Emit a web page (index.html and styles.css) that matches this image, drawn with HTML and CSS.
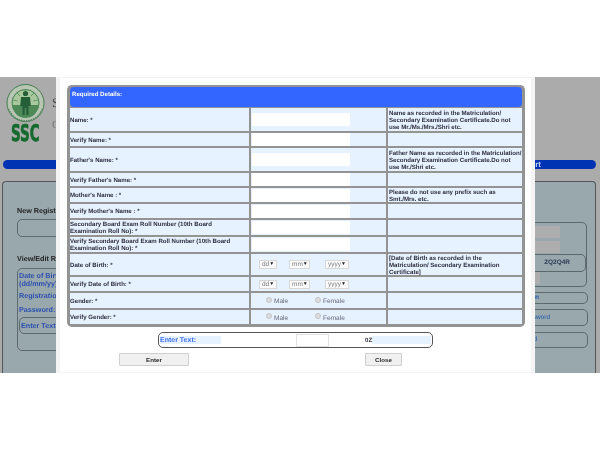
FILE: index.html
```html
<!DOCTYPE html>
<html lang="en">
<head>
<meta charset="utf-8">
<title>SSC Registration</title>
<link rel="stylesheet" href="styles.css">
</head>
<body>
<div class="stage">
  <div class="page">
    <header class="site-head">
      <svg class="logo" width="42" height="68" viewBox="0 0 42 68" aria-hidden="true">
        <circle cx="20.5" cy="20" r="18.500" fill="#b9c6b4" stroke="#3f7f4f" stroke-width="1"/>
        <circle cx="20.5" cy="20" r="13.5" fill="#a9c79c" stroke="#3f7f4f" stroke-width="1"/>
        <path d="M7.5 22h26a13 13 0 0 1-26 0z" fill="#4d8a58"/>
        <g stroke="#4d8a58" stroke-width=".8">
          <path d="M20.5 7v4M12 10l3 3M29 10l-3 3M8.5 17l4 1M32.500 17l-4 1"/>
        </g>
        <circle cx="20.500" cy="10.500" r="2.600" fill="#245f38"/>
        <path d="M16 14h9l.8 9h-2.300v9h-2.200v-7h-1.600v7h-2.200v-9H15.200z" fill="#245f38"/>
        <path d="M3.500 26a18 18 0 0 0 34 0" fill="none" stroke="#5c8a66" stroke-width="2" stroke-dasharray="1.500 1"/>
        <text class="logo-ssc" transform="translate(6 57.500) scale(1 1.700)">SSC</text>
      </svg>
      <div class="site-title">
        <p class="title-main">S</p>
        <p class="title-sub">C</p>
      </div>
    </header>
    <div class="bar"><span>rt</span></div>
    <main class="panel">
      <section class="col-left">
        <h2 class="reg-head">New Registr</h2>
        <div class="reg-box"></div>
        <h2 class="edit-head">View/Edit R</h2>
        <div class="edit-box">
          <p class="blue dob">Date of Birt<br>(dd/mm/yy)</p>
          <p class="blue reg">Registratio</p>
          <p class="blue pass">Password:</p>
          <div class="edit-cap"><p class="blue">Enter Text:</p></div>
        </div>
      </section>
      <section class="col-right">
        <div class="login-box">
          <div class="fake-input"></div>
          <div class="fake-input second"></div>
          <div class="code-box"><span>2Q2Q4R</span></div>
          <div class="fake-small"></div>
        </div>
        <a class="link-box one">n</a>
        <a class="link-box two">sword</a>
        <a class="link-box three">d</a>
      </section>
    </main>
  </div>

  <div class="modal">
    <div class="table-wrap">
      <div class="table-head">Required Details:</div>
      <div class="grid">
        <div class="cell">Name: *</div><div class="cell val"><span class="input"></span></div><div class="cell note">Name as recorded in the Matriculation/ Secondary Examination Certificate.Do not use Mr./Ms./Mrs./Shri etc.</div>
        <div class="cell">Verify Name: *</div><div class="cell val"><span class="input"></span></div><div class="cell note"></div>
        <div class="cell">Father's Name: *</div><div class="cell val"><span class="input"></span></div><div class="cell note">Father Name as recorded in the Matriculation/ Secondary Examination Certificate.Do not use Mr./Shri etc.</div>
        <div class="cell">Verify Father's Name: *</div><div class="cell val"><span class="input"></span></div><div class="cell note"></div>
        <div class="cell">Mother's Name : *</div><div class="cell val"><span class="input"></span></div><div class="cell note">Please do not use any prefix such as Smt./Mrs. etc.</div>
        <div class="cell">Verify Mother's Name : *</div><div class="cell val"><span class="input"></span></div><div class="cell note"></div>
        <div class="cell">Secondary Board Exam Roll Number (10th Board Examination Roll No): *</div><div class="cell val"><span class="input"></span></div><div class="cell note"></div>
        <div class="cell">Verify Secondary Board Exam Roll Number (10th Board Examination Roll No): *</div><div class="cell val"><span class="input"></span></div><div class="cell note"></div>
        <div class="cell">Date of Birth: *</div>
        <div class="cell val dates"><span class="sel dd">dd<i>▼</i></span><span class="sel mm">mm<i>▼</i></span><span class="sel yy">yyyy<i>▼</i></span></div>
        <div class="cell note">[Date of Birth as recorded in the Matriculation/ Secondary Examination Certificate]</div>
        <div class="cell">Verify Date of Birth: *</div>
        <div class="cell val dates"><span class="sel dd">dd<i>▼</i></span><span class="sel mm">mm<i>▼</i></span><span class="sel yy">yyyy<i>▼</i></span></div>
        <div class="cell note"></div>
        <div class="cell">Gender: *</div>
        <div class="cell val genders"><span class="radio male"></span><span class="rlabel">Male</span><span class="radio female"></span><span class="rlabel">Female</span></div>
        <div class="cell note"></div>
        <div class="cell">Verify Gender: *</div>
        <div class="cell val genders"><span class="radio male"></span><span class="rlabel">Male</span><span class="radio female"></span><span class="rlabel">Female</span></div>
        <div class="cell note"></div>
      </div>
    </div>
    <div class="captcha">
      <span class="cap-label">Enter Text:</span>
      <span class="cap-input"></span>
      <span class="cap-code">0Z</span>
    </div>
    <div class="actions">
      <button class="btn enter" type="button">Enter</button>
      <button class="btn close" type="button">Close</button>
    </div>
  </div>
</div>
</body>
</html>
```
FILE: styles.css
```css
* { box-sizing: border-box; }
html, body { margin: 0; padding: 0; background: #fff; }
body { width: 600px; height: 450px; overflow: hidden; font-family: "Liberation Sans", Arial, sans-serif; text-rendering: geometricPrecision; }
p, h2 { margin: 0; }

.stage { position: relative; margin-top: 77px; height: 296px; overflow: hidden; filter: blur(0.4px); }

/* dimmed page behind the dialog */
.page { height: 296px; background: #ababab; padding: 0 4px 0 2px; overflow: hidden; }
.site-head { display: flex; padding: 6px 0 0 3px; height: 83px; }
.logo { display: block; flex: none; }
.logo-ssc { font: bold 13.500px "DejaVu Sans", sans-serif; fill: #136a2c; stroke: #136a2c; stroke-width: .4px; }
.site-title { margin-left: 5px; font-family: "Liberation Serif", serif; }
.title-main { margin-top: 12px; font-size: 13px; color: #444; }
.title-sub { margin-top: 8px; font-size: 11px; color: #777; }
.bar { height: 9px; margin-left: 1px; border-radius: 5px; background: #0033b4; text-align: right; padding-right: 55px; color: #c4d0f0; font: bold 8px/9px "Liberation Sans", sans-serif; }
.panel { display: flex; justify-content: space-between; height: 200px; margin-top: 12px; background: #99a8ac; border: 1px solid #555; border-bottom: 0; border-radius: 4px 4px 0 0; padding: 0 7px 0 14px; }
.col-left { width: 260px; }
.reg-head { margin-top: 24px; font-size: 7.200px; line-height: 10px; color: #222; }
.reg-box { margin-top: 3px; height: 18px; border: 1px solid #5c6a6e; border-radius: 5px; }
.edit-head { margin-top: 17px; font-size: 7.200px; line-height: 10px; color: #222; }
.edit-box { margin-top: 4px; height: 83px; border: 1px solid #5c6a6e; border-radius: 5px; padding: 3px 1px; }
.blue { color: #2c4fb0; font-size: 7.200px; line-height: 8px; font-weight: bold; }
.reg { margin-top: 4px; }
.pass { margin-top: 6px; }
.edit-cap { margin-top: 3px; height: 17px; border: 1px solid #5c6a6e; border-radius: 5px; padding: 4px 1px; }
.col-right { width: 240px; }
.login-box { margin: 40px 1px 0 0; height: 65px; border: 1px solid #5c6a6e; border-radius: 5px; padding: 3px 0 0 180px; }
.fake-input { width: 31px; height: 12px; margin-bottom: 3px; background: #adadad; }
.fake-input.second { margin-bottom: 1px; }
.code-box { height: 18px; border: 1px solid #5c6a6e; border-radius: 5px; text-align: right; padding: 4px 15px 0 0; font: bold 6.500px/8px "Liberation Sans", sans-serif; color: #2a3a55; }
.fake-small { width: 11px; height: 12px; background: #adadad; }
.link-box { display: block; border: 1px solid #5c6a6e; border-radius: 5px; text-align: right; color: #2257ad; font-size: 6.500px; }
.one { height: 12px; margin-top: 5px; padding-right: 48px; line-height: 10px; font-weight: bold; }
.two { height: 17px; margin-top: 5px; padding-right: 37px; line-height: 15px; }
.three { height: 16px; margin-top: 6px; padding-right: 50px; line-height: 14px; }

/* dialog */
.modal { position: absolute; left: 56px; top: 0; width: 479px; height: 296px; background: #fff; border: solid #f4f4f4; border-width: 1px 4px; padding: 7px 0 0 7px; }
.table-wrap { width: 458px; height: 242px; padding: 2px 3px; background: #939393; border-radius: 5px; }
.table-head { height: 20px; padding: 4px 2px; background: #3366ff; border-radius: 4px; color: #fff; font-size: 6.100px; line-height: 8px; font-weight: bold; }
.grid { display: grid; margin-top: 1px; grid-template-columns: 179px 135px 134px; grid-template-rows: 23px 13px 23px 13px 14px 14px 15px 15px 21px 14px 15px 14px; gap: 2px; }
.cell { display: flex; align-items: center; background: #e6f2ff; padding: 1px 0 0; color: #2e2e3e; font-size: 6.100px; line-height: 7px; font-weight: bold; }
.note { padding-left: 1px; }
.val { padding: 0; }
.input { display: block; width: 98px; height: 13px; margin-left: 1px; background: #fff; border-radius: 1px; }
.sel { display: flex; justify-content: space-between; align-items: center; height: 9px; padding: 0 2px; background: #fbfbfb; border: 1px solid #d8d8d8; color: #777; font-weight: normal; font-size: 6.500px; }
.sel i { font-style: normal; font-size: 5px; color: #222; }
.dd { width: 18px; margin-left: 8px; }
.mm { width: 21px; margin-left: 12px; }
.yy { width: 24px; margin-left: 15px; }
.radio { flex: none; width: 6px; height: 6px; border-radius: 50%; background: #dcdcdc; border: 1px solid #c4c4c4; margin-top: -2px; }
.male { margin-left: 15px; }
.female { margin-left: 27px; }
.rlabel { margin-left: 2px; color: #667; font-size: 6.500px; font-weight: normal; margin-top: 2px; }

.captcha { display: flex; align-items: center; width: 275px; height: 16px; margin: 5px 0 0 91px; background: #fff; border: 1px solid #555; border-radius: 5px; padding-left: 1px; }
.cap-label { width: 61px; height: 8px; background: #e6f2ff; color: #3f6fee; font-size: 7px; line-height: 9px; font-weight: bold; white-space: nowrap; }
.cap-input { width: 33px; height: 13px; margin-left: 75px; background: #fff; border: 1px solid #e2e2e2; }
.cap-code { width: 66px; height: 8px; margin-left: 36px; background: linear-gradient(90deg, #fff 7px, #e6f2ff 7px); color: #2e2e3e; font-size: 6.100px; line-height: 9px; font-weight: bold; }

.actions { display: flex; margin: 5px 0 0 52px; }
.btn { height: 13px; padding: 0; background: #f0f0f0; border: 1px solid #cfcfcf; border-radius: 1px; color: #222; font: bold 6.200px/10px "Liberation Sans", sans-serif; }
.enter { width: 70px; }
.close { width: 37px; margin-left: 176px; }
```
